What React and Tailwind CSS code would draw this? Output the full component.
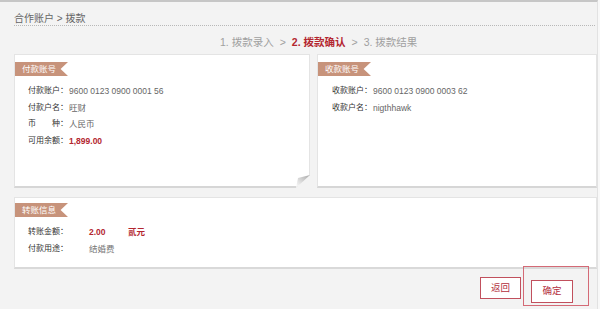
const FONT = "font-['Liberation_Sans','Noto_Sans_CJK_SC',sans-serif]";

function Ribbon({ children }) {
  return (
    <div className="h-[14px] w-[53px] whitespace-nowrap bg-[#c7937b] pl-[7px] text-[8.5px] leading-[14px] text-white [clip-path:polygon(0_0,100%_0,86%_50%,100%_100%,0_100%)]">
      {children}
    </div>
  );
}

function Row({ label, children, labelW = 'w-[41px]' }) {
  return (
    <div className="flex h-[16.5px] items-center whitespace-nowrap text-[8.5px] leading-[16px]">
      <span className={`${labelW} shrink-0 text-[8px] text-[#333]`}>{label}</span>
      {children}
    </div>
  );
}

export default function App() {
  return (
    <div className={`relative h-[309px] w-[600px] overflow-hidden bg-[#f8f8f8] ${FONT}`}>
      <div className="h-full w-[598px] border-r border-t-2 border-r-[#e2e2e2] border-t-[#c6c6c6] bg-[#f3f3f3]">
        {/* 面包屑 */}
        <div className="h-[23px] pl-[14px] pt-[11px] text-[10px] leading-[12px] text-[#666]">
          合作账户 &gt; 拨款
        </div>
        <div className="ml-[14px] mr-[2px] border-b border-dotted border-[#b8b8b8]" />

        {/* 步骤 */}
        <div className="flex h-[28px] items-start gap-[6px] pl-[220px] pt-[10px] text-[10.5px] leading-[12px] text-[#a0a0a0]">
          <span>1. 拨款录入</span>
          <span>&gt;</span>
          <span className="font-bold text-[#b3262f]">2. 拨款确认</span>
          <span>&gt;</span>
          <span>3. 拨款结果</span>
        </div>

        {/* 账号卡片 */}
        <div className="flex h-[134px] gap-[7px] pl-[14px]">
          <div className="relative w-[296px] border border-[#e4e4e4] border-b-2 border-b-[#d6d6d6] bg-white">
            <div className="mt-[7px]">
              <Ribbon>付款账号</Ribbon>
            </div>
            <div className="mt-[7px] pl-[13px]">
              <Row label="付款账户：">
                <span className="text-[#666]">9600 0123 0900 0001 56</span>
              </Row>
              <Row label="付款户名：">
                <span className="text-[#666]">旺财</span>
              </Row>
              <Row label="币　　种：">
                <span className="text-[#666]">人民币</span>
              </Row>
              <Row label="可用余额：">
                <span className="font-bold text-[#b3262f]">1,899.00</span>
              </Row>
            </div>
            <svg className="absolute -bottom-[2px] -right-px" width="14" height="13" viewBox="0 0 14 13">
              <defs>
                <linearGradient id="fold" x1="0" y1="1" x2="1" y2="0">
                  <stop offset="0" stopColor="#ffffff" />
                  <stop offset="1" stopColor="#a9a9a9" />
                </linearGradient>
              </defs>
              <polygon points="14,0 14,13 0,13" fill="#f3f3f3" />
              <polygon points="14,0 0,13 2,3" fill="url(#fold)" />
            </svg>
          </div>

          <div className="flex-1 border border-[#e4e4e4] border-b-2 border-b-[#d6d6d6] bg-white">
            <div className="mt-[7px]">
              <Ribbon>收款账号</Ribbon>
            </div>
            <div className="mt-[7px] pl-[14px]">
              <Row label="收款账户：">
                <span className="text-[#666]">9600 0123 0900 0003 62</span>
              </Row>
              <Row label="收款户名：">
                <span className="text-[#666]">nigthhawk</span>
              </Row>
            </div>
          </div>
        </div>

        {/* 转账信息 */}
        <div className="ml-[14px] mt-[9px] h-[72px] border border-[#e4e4e4] border-b-2 border-b-[#d9d9d9] bg-white">
          <div className="mt-[5px]">
            <Ribbon>转账信息</Ribbon>
          </div>
          <div className="mt-[7px] pl-[13px]">
            <Row label="转账金额：" labelW="w-[61px]">
              <span className="w-[39px] font-bold text-[#b3262f]">2.00</span>
              <span className="font-bold text-[#b3262f]">贰元</span>
            </Row>
            <Row label="付款用途：" labelW="w-[61px]">
              <span className="text-[#777]">结婚费</span>
            </Row>
          </div>
        </div>

        {/* 按钮 */}
        <div className="flex items-start justify-end pr-[8px]">
          <button className="mt-[8px] h-[22px] w-[41px] border border-[#c1505d] bg-white text-[9.5px] text-[#b3303e]">
            返回
          </button>
          <div className="-mt-[3px] ml-[2px] h-[40px] w-[66px] border border-[#d46a76] pl-[7px] pt-[10px]">
            <button className="h-[23px] w-[42px] border border-[#c1505d] bg-white text-[9.5px] text-[#b3303e]">
              确定
            </button>
          </div>
        </div>
      </div>
    </div>
  );
}
